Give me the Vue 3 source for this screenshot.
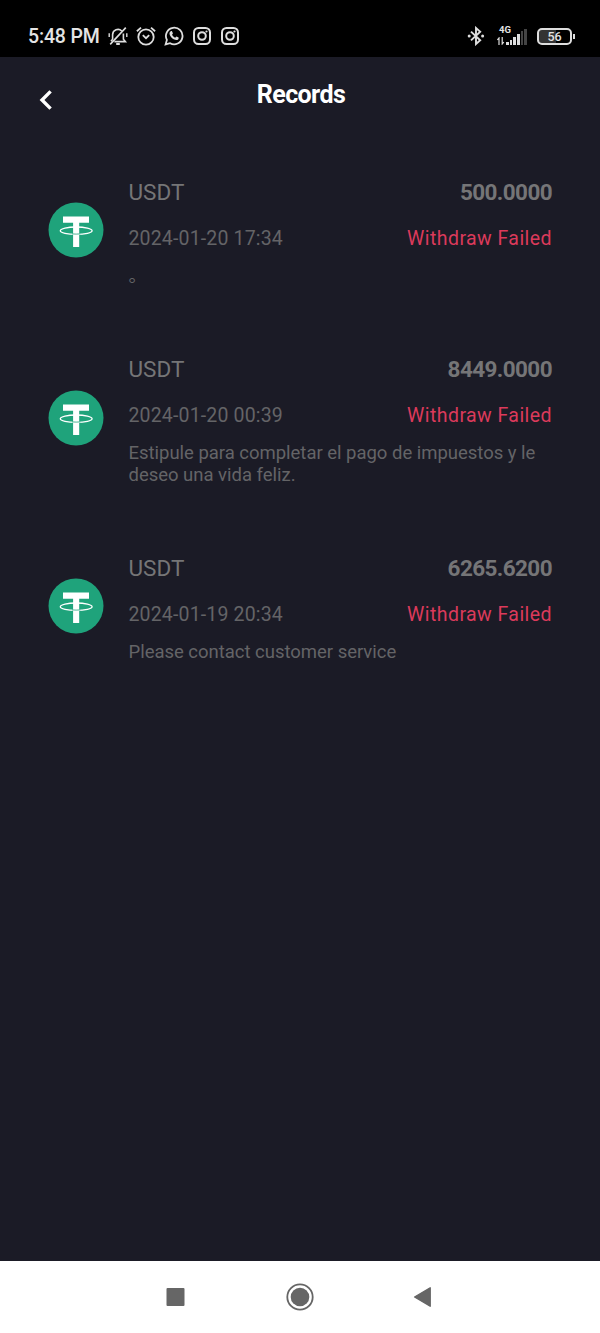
<script setup>
import { ref } from 'vue'

// withdraw history
const records = ref([
  { id: 1, coin: 'USDT', amount: '500.0000', date: '2024-01-20 17:34', status: 'Withdraw Failed', note: '。' },
  { id: 2, coin: 'USDT', amount: '8449.0000', date: '2024-01-20 00:39', status: 'Withdraw Failed', note: 'Estipule para completar el pago de impuestos y le deseo una vida feliz.' },
  { id: 3, coin: 'USDT', amount: '6265.6200', date: '2024-01-19 20:34', status: 'Withdraw Failed', note: 'Please contact customer service' },
])

// signal bars, last two are off
const bars = [
  { h: 3, on: true },
  { h: 5, on: true },
  { h: 8, on: true },
  { h: 11, on: true },
  { h: 14, on: false },
  { h: 16, on: false },
]
</script>

<template>
  <div class="screen">
    <div class="status-bar">
      <span class="clock">5:48 PM</span>

      <div class="status-icons">
        <!-- muted bell -->
        <svg width="20" height="20" viewBox="0 0 20 20" fill="none" stroke="#dedede" stroke-width="1.6">
          <path d="M4.6 13.2V8.6a5.4 5.4 0 0 1 9.2-3.6M15.4 7.6v5.6l2 2.4H6.4M4.6 13.2l-1.6 2" />
          <path d="M2.2 18.4L17.8 1.6" />
          <path d="M1.2 7.2v3.8M18.8 7.2v3.8" stroke-width="1.4" />
          <path d="M8.2 18h3.6" stroke-width="2" />
        </svg>
        <!-- alarm -->
        <svg width="20" height="20" viewBox="0 0 20 20" fill="none" stroke="#dedede" stroke-width="1.8">
          <circle cx="10" cy="11" r="7.7" />
          <path d="M.9 5.2L5 1.6M19.1 5.2L15 1.6M6.8 9.2l3.2 3 3.2-3" />
        </svg>
        <!-- whatsapp -->
        <svg width="20" height="20" viewBox="0 0 20 20">
          <path d="M1.6 18.4l1.3-4.5A8.3 8.3 0 1 1 6.1 17.2z" fill="none" stroke="#dedede" stroke-width="1.8" />
          <path d="M6.7 5.3c.5-.5 1.2-.4 1.4.1l.8 1.9c.1.4-.6 1.1-.8 1.4.7 1.4 1.7 2.3 3.2 3 .4-.3.9-1.2 1.3-1.1l1.9.9c.5.3.1 1.4-.4 1.9-1 .9-2.4.8-4.4-.2-1.7-.9-3.1-2.4-3.9-4.2-.6-1.6-.3-2.8.9-3.7z" fill="#dedede" />
        </svg>
        <!-- instagram x2 -->
        <svg v-for="n in 2" :key="n" width="20" height="20" viewBox="0 0 20 20" fill="none" stroke="#dedede" stroke-width="2">
          <rect x="2" y="2" width="16" height="16" rx="4.5" />
          <circle cx="10" cy="10" r="3.8" />
          <circle cx="14.5" cy="5.5" r="1.1" fill="#dedede" stroke="none" />
        </svg>
      </div>

      <div class="status-right">
        <svg width="18" height="20" viewBox="0 0 18 20" fill="none" stroke="#dedede" stroke-width="1.9">
          <path d="M4 5.6l9.2 8.6L9 18V2l4.2 3.8L4 14.4" />
          <circle cx="2.2" cy="10" r="1.5" fill="#dedede" stroke="none" />
          <circle cx="15.6" cy="10" r="1.5" fill="#dedede" stroke="none" />
        </svg>

        <div class="network">
          <span class="net-type">4G</span>
          <svg class="arrows" width="8" height="8" viewBox="0 0 8 8" fill="none" stroke="#dedede" stroke-width="1.2">
            <path d="M2 8V1L.4 3M5.2 0v7L6.8 5" />
          </svg>
          <div class="bars">
            <i v-for="(bar, i) in bars" :key="i" :class="{ on: bar.on }" :style="{ height: bar.h + 'px' }"></i>
          </div>
        </div>

        <div class="battery">
          <div class="battery-body">56</div>
          <div class="battery-tip"></div>
        </div>
      </div>
    </div>

    <header class="header">
      <button class="back">
        <svg width="14" height="22" viewBox="0 0 14 22" fill="none" stroke="#fff" stroke-width="3.4">
          <path d="M11.6 2.4L3 11l8.6 8.6" />
        </svg>
      </button>
      <h1>Records</h1>
    </header>

    <main class="list">
      <div v-for="item in records" :key="item.id" class="record">
        <svg class="coin" width="56" height="56" viewBox="0 0 56 56">
          <circle cx="28" cy="28" r="27.5" fill="#1fa37b" />
          <ellipse cx="28.2" cy="28.7" rx="15.9" ry="3.7" fill="none" stroke="#fff" stroke-width="1.3" />
          <path d="M15 14.5h26v6.2h-9.8V45h-6.1V20.7H15z" fill="#fff" />
          <path d="M24 31.9q4.2.4 8.4 0" fill="none" stroke="#1fa37b" stroke-width=".8" />
        </svg>

        <div class="info">
          <div class="row">
            <span class="name">{{ item.coin }}</span>
            <span class="amount">{{ item.amount }}</span>
          </div>
          <div class="row">
            <span class="date">{{ item.date }}</span>
            <span class="status">{{ item.status }}</span>
          </div>
          <p class="note">{{ item.note }}</p>
        </div>
      </div>
    </main>

    <nav class="nav-bar">
      <svg width="30" height="30" viewBox="0 0 30 30">
        <rect x="5.5" y="6" width="18" height="18" rx="1" fill="#666" />
      </svg>
      <svg width="30" height="30" viewBox="0 0 30 30">
        <circle cx="15" cy="15" r="12.7" fill="none" stroke="#666" stroke-width="1.8" />
        <circle cx="15" cy="15" r="9.3" fill="#666" />
      </svg>
      <svg width="30" height="30" viewBox="0 0 30 30">
        <path d="M5.6 15L21.2 5.8v18.4z" fill="#666" stroke="#666" stroke-width="1.4" stroke-linejoin="round" />
      </svg>
    </nav>
  </div>
</template>

<style>
body {
  margin: 0;
  background: #1b1b26;
}
</style>

<style scoped>
.screen {
  display: flex;
  flex-direction: column;
  width: 600px;
  height: 1333px;
  overflow: hidden;
  background: #1b1b26;
  font-family: Roboto, "Noto Sans CJK SC", sans-serif;
}

/* status bar */
.status-bar {
  display: flex;
  align-items: center;
  box-sizing: border-box;
  height: 57px;
  padding: 15px 25px 0 28px;
  background: #000;
  color: #e4e4e4;
}

.clock {
  width: 80px;
  font-size: 19.5px;
  font-weight: 500;
  letter-spacing: -0.15px;
  white-space: nowrap;
}

.status-icons {
  display: flex;
  gap: 8px;
}

.status-right {
  display: flex;
  align-items: center;
  margin-left: auto;
}

.network {
  display: grid;
  grid-template-columns: 8px 22px;
  align-items: end;
  width: 31px;
  height: 19px;
  margin: 0 9px 2px 12px;
}

.net-type {
  grid-area: 1 / 1 / 2 / 3;
  align-self: start;
  padding-left: 2px;
  font-size: 9.5px;
  font-weight: 700;
  line-height: 8px;
}

.arrows {
  grid-area: 1 / 1;
}

.bars {
  grid-area: 1 / 2;
  display: flex;
  align-items: flex-end;
  gap: 1px;
  padding-left: 1px;
}

.bars i {
  width: 3px;
  background: #444;
}

.bars i.on {
  background: #dedede;
}

.battery {
  display: flex;
  align-items: center;
  gap: 1px;
}

.battery-body {
  box-sizing: border-box;
  width: 35px;
  height: 17px;
  border: 2px solid #dedede;
  border-radius: 5px;
  background: linear-gradient(90deg, #333 56%, #000 56%);
  font-size: 12.5px;
  font-weight: 500;
  line-height: 14px;
  text-align: center;
}

.battery-tip {
  width: 2px;
  height: 5px;
  background: #dedede;
}

/* title */
.header {
  display: grid;
  grid-template-columns: 90px 1fr 90px;
  height: 84.5px;
  color: #fff;
}

.back {
  display: flex;
  align-items: center;
  height: 86px;
  padding: 0 0 0 39px;
  border: 0;
  background: none;
}

.header h1 {
  margin: 0;
  padding-left: 2px;
  font-size: 25px;
  font-weight: 700;
  line-height: 75px;
  letter-spacing: -0.6px;
  text-align: center;
}

/* records */
.list {
  flex: 1;
}

.record {
  display: flex;
  align-items: center;
  padding: 27.5px 48px 31px;
}

.coin {
  flex: none;
  margin: 4px 24.5px 0 0;
}

.info {
  flex: 1;
}

.row {
  display: flex;
  justify-content: space-between;
  height: 46px;
  line-height: 46px;
}

.name {
  font-size: 22.5px;
  color: #757577;
}

.amount {
  font-size: 22.5px;
  font-weight: 700;
  letter-spacing: -0.6px;
  color: #757577;
}

.date {
  font-size: 19.5px;
  line-height: 47px;
  letter-spacing: 0.16px;
  color: #646467;
}

.status {
  font-size: 19.5px;
  line-height: 47px;
  letter-spacing: 0.44px;
  color: #dc3a5b;
}

.note {
  margin: 4px 0 0;
  font-size: 18.5px;
  line-height: 22.2px;
  letter-spacing: -0.02px;
  color: #646467;
}

/* android buttons */
.nav-bar {
  display: flex;
  align-items: center;
  justify-content: center;
  gap: 94px;
  height: 72px;
  background: #fff;
}
</style>
